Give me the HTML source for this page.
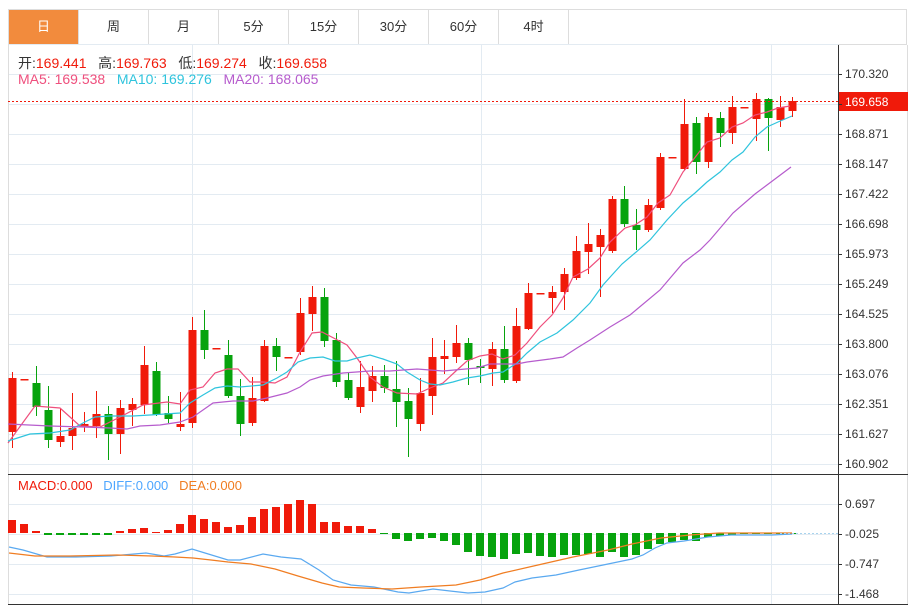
<!DOCTYPE html>
<html><head><meta charset="utf-8">
<style>
html,body{margin:0;padding:0;background:#fff;width:913px;height:607px;overflow:hidden;font-family:"Liberation Sans","Noto Sans CJK SC",sans-serif}
.tabs{position:absolute;left:8px;top:9px;width:899px;height:36px;border:1px solid #ddd;box-sizing:border-box;display:flex}
.tab{width:70px;height:34px;line-height:34px;text-align:center;font-size:13px;color:#333;border-right:1px solid #ddd;box-sizing:border-box}
.tab.on{background:#f28b3d;color:#fff}
.lg{position:absolute;font-size:14px;white-space:nowrap}
</style></head><body>
<div class="tabs"><div class="tab on">日</div><div class="tab">周</div><div class="tab">月</div><div class="tab">5分</div><div class="tab">15分</div><div class="tab">30分</div><div class="tab">60分</div><div class="tab">4时</div></div>
<svg id="s" width="913" height="607" style="position:absolute;left:0;top:0" xmlns="http://www.w3.org/2000/svg">
<g id="grid" stroke="#e3ebf2" stroke-width="1"></g>
<line x1="8.5" y1="45" x2="8.5" y2="604" stroke="#ddd"/>
<line x1="907.5" y1="45" x2="907.5" y2="604" stroke="#ddd"/>
<line x1="838.5" y1="45" x2="838.5" y2="604" stroke="#333"/>
<line x1="8" y1="474.5" x2="908" y2="474.5" stroke="#333"/>
<line x1="8" y1="604.5" x2="908" y2="604.5" stroke="#333"/>
<g id="c"></g>
<g id="m"></g>
<line x1="8" y1="101.5" x2="838" y2="101.5" stroke="#f01a0a" stroke-dasharray="2,2"/>
<line x1="780" y1="533.5" x2="838" y2="533.5" stroke="#a9d4ee" stroke-dasharray="2,2"/>
<rect x="839" y="92" width="69" height="19" fill="#f01a0a"/>
<text x="845" y="106" font-size="12" fill="#fff">169.658</text>
<g font-size="12" fill="#333">
<text x="845" y="78">170.320</text><text x="845" y="138">168.871</text><text x="845" y="168">168.147</text><text x="845" y="198">167.422</text><text x="845" y="228">166.698</text><text x="845" y="258">165.973</text><text x="845" y="288">165.249</text><text x="845" y="318">164.525</text><text x="845" y="348">163.800</text><text x="845" y="378">163.076</text><text x="845" y="408">162.351</text><text x="845" y="438">161.627</text><text x="845" y="468">160.902</text>
<text x="845" y="508">0.697</text><text x="845" y="538">-0.025</text><text x="845" y="568">-0.747</text><text x="845" y="598">-1.468</text>
</g>
<g id="tk" stroke="#333"></g>
</svg>
<div class="lg" style="left:18px;top:53px;color:#333">开:<span style="color:#f01a0a">169.441</span>&nbsp;&nbsp; 高:<span style="color:#f01a0a">169.763</span>&nbsp;&nbsp; 低:<span style="color:#f01a0a">169.274</span>&nbsp;&nbsp; 收:<span style="color:#f01a0a">169.658</span></div>
<div class="lg" style="left:18px;top:71px"><span style="color:#ef4f7d">MA5: 169.538</span>&nbsp;&nbsp; <span style="color:#2fc4dd">MA10: 169.276</span>&nbsp;&nbsp; <span style="color:#b65ccd">MA20: 168.065</span></div>
<div class="lg" style="left:18px;top:478px;font-size:13px"><span style="color:#f01a0a">MACD:0.000</span>&nbsp;&nbsp; <span style="color:#4da6ff">DIFF:0.000</span>&nbsp;&nbsp; <span style="color:#f07d22">DEA:0.000</span></div>
<script>
var NS="http://www.w3.org/2000/svg";
function el(p,t,a){var e=document.createElementNS(NS,t);for(var k in a)e.setAttribute(k,a[k]);document.getElementById(p).appendChild(e);return e;}
var ys=[74,104,134,164,194,224,254,284,314,344,374,404,434,464,504,534,564,594];
ys.forEach(function(y){el("grid","line",{x1:9,x2:838,y1:y+.5,y2:y+.5});el("tk","line",{x1:838,x2:842,y1:y+.5,y2:y+.5});});
el("grid","line",{x1:9,x2:838,y1:44.5,y2:44.5});
[192,481,771].forEach(function(x){el("grid","line",{x1:x+.5,x2:x+.5,y1:45,y2:604});});
var R="#f01a0a",G="#07a30d";
var C=[[378,432,372,448,R],[379,380,379,380,R],[383,407,366,416,G],[410,440,386,448,G],[436,442,408,447,R],[428,436,393,450,R],[424,427,412,432,R],[414,426,391,438,R],[414,434,406,460,G],[408,434,400,454,R],[404,410,398,426,R],[365,405,346,414,R],[371,415,362,416,G],[413,419,396,423,G],[424,427,392,431,R],[330,423,317,428,R],[330,350,310,359,G],[348,349,348,349,R],[355,396,340,398,G],[396,424,379,436,G],[398,423,377,426,R],[346,401,340,402,R],[346,357,338,371,G],[357,358,357,358,R],[313,352,298,355,R],[297,314,286,331,R],[297,341,288,347,G],[340,382,333,387,G],[380,398,372,400,G],[387,407,361,413,R],[376,391,366,402,R],[376,388,365,393,G],[389,402,361,427,G],[401,419,388,457,G],[393,424,378,431,R],[357,396,338,415,R],[356,359,340,374,R],[343,357,325,363,R],[343,360,338,385,G],[366,368,359,383,G],[349,369,342,386,R],[349,380,326,383,G],[326,381,308,383,R],[293,329,283,330,R],[293,294,293,294,R],[292,298,286,313,R],[274,292,268,310,R],[251,278,236,280,R],[244,252,223,274,R],[235,247,229,297,R],[199,251,196,253,R],[199,224,186,227,G],[225,230,209,250,G],[205,230,199,232,R],[157,208,153,210,R],[157,158,157,158,R],[124,169,99,170,R],[123,162,117,174,G],[117,162,113,168,R],[118,133,112,147,G],[107,133,96,144,R],[107,108,107,108,R],[99,119,93,141,R],[99,118,98,151,G],[107,120,96,127,R],[101,111,97,117,R]];
C.forEach(function(d,i){var x=12+12*i;el("c","line",{x1:x+.5,x2:x+.5,y1:d[2],y2:d[3],stroke:d[4]});el("c","rect",{x:x-3.5,y:d[0],width:8,height:Math.max(1.5,d[1]-d[0]),fill:d[4]});});
function pl(pts,col){el("m","polyline",{points:pts,fill:"none",stroke:col,"stroke-width":1.2});}
pl("8,443 35,406 60,408 80,426 100,427 120,417 143,405 167,402 180,404 190,390 203,387 215,373 227,369 238,369 250,382 263,382 275,383 287,377 300,352 312,333 322,332 347,345 357,358 370,377 383,387 397,393 417,394 430,388 443,383 457,370 467,361 480,356 492,354 503,359 515,355 527,343 540,327 552,315 563,298 573,277 588,269 600,258 610,242 625,228 635,225 647,217 658,203 670,195 683,172 693,160 707,142 720,138 732,127 743,123 755,115 767,112 778,108 790,106","#ef4f7d");
pl("8,441 30,434 50,433 70,430 83,423 95,417 110,416 133,416 150,415 180,413 190,403 203,395 215,388 227,386 240,387 263,385 277,378 287,372 298,362 310,358 323,357 335,361 347,361 357,358 370,355 383,359 397,364 407,372 420,380 430,384 440,385 453,382 467,378 480,376 493,373 503,372 517,363 527,353 540,342 557,333 573,320 590,303 603,285 612,275 622,264 635,253 650,240 667,220 683,203 695,193 707,182 720,172 732,160 743,152 755,137 767,127 778,122 792,116","#2fc4dd");
pl("8,424 50,426 83,427 110,428 127,429 140,426 160,425 180,422 193,417 213,403 233,401 253,401 267,398 287,393 300,387 310,380 323,376 343,373 370,371 390,371 417,369 443,371 477,368 490,364 517,364 527,362 550,359 563,357 577,348 590,340 610,327 630,315 660,290 683,263 700,250 710,240 733,213 755,194 767,185 791,167","#b65ccd");
var M={0:-13,1:-9,2:-2,3:2,4:2,5:2,6:2,7:2,8:2,9:-2,10:-4,11:-5,12:-1,13:-3,14:-9,15:-18,16:-14,17:-11,18:-6,19:-8,20:-16,21:-24,22:-26,23:-29,24:-33,25:-29,26:-11,27:-11,28:-7,29:-7,30:-4,31:1,32:6,33:8,34:6,35:5,36:8,37:12,38:19,39:23,40:24,41:26,42:21,43:20,44:23,45:24,46:22,47:22,48:21,49:24,50:19,51:24,52:22,53:16,54:11,55:9,56:7,57:8,58:4,59:3,60:2,61:1,62:1,63:1,64:1,65:1};
for(var i=0;i<66;i++){var v=M[i],x=12+12*i-4;if(v<0)el("m","rect",{x:x,y:533+v,width:8,height:-v,fill:R});else el("m","rect",{x:x,y:533,width:8,height:v,fill:G});}
pl("9,547 23,550 47,557 76,557 111,556 134,554 146,553 164,556 175,554 192,549 205,553 228,560 240,560 263,554 281,557 301,559 319,570 333,580 351,585 374,587 398,592 409,593 433,589 450,591 468,593 485,592 503,588 515,582 532,578 556,575 579,570 608,564 632,559 643,555 655,548 667,543 684,541 708,537 731,535 772,535 792,534","#5aa9f0");
pl("9,553 35,556 70,556 117,555 152,556 175,557 193,558 211,560 228,562 251,564 275,569 298,576 322,583 339,587 363,588 392,589 421,587 456,585 480,580 503,573 538,565 573,557 608,550 632,544 661,538 690,535 719,533 792,533","#f07d22");
</script>
</body></html>
